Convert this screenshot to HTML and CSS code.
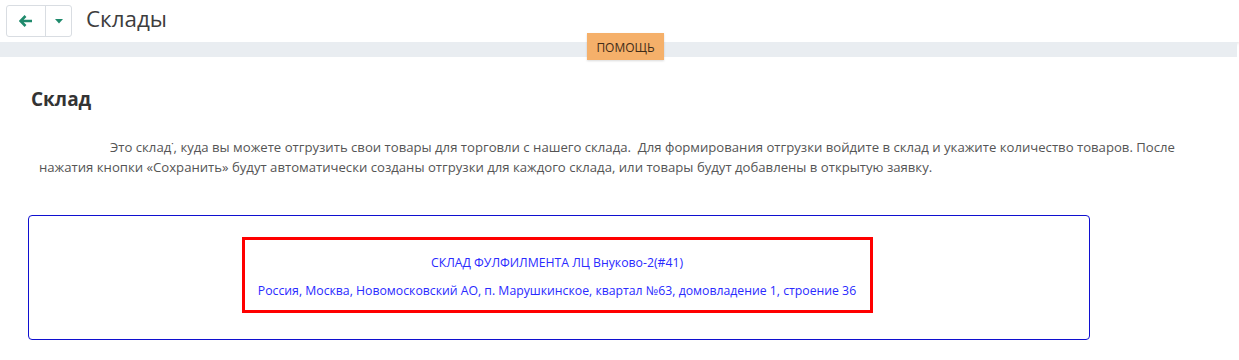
FILE: index.html
```html
<!DOCTYPE html>
<html lang="ru">
<head>
<meta charset="utf-8">
<title>Склады</title>
<link rel="stylesheet" href="styles.css">
</head>
<body>
<header class="topbar">
  <div class="btn-group">
    <button class="btn btn-back" type="button" aria-label="Назад">
      <svg width="14" height="12" viewBox="0 0 14 12"><path d="M6.5 1 L1.5 6 L6.5 11 M2 6 H13" fill="none" stroke="#1f8a6c" stroke-width="2.6" stroke-linejoin="miter"/></svg>
    </button>
    <button class="btn btn-caret" type="button" aria-label="Меню">
      <svg width="8" height="5" viewBox="0 0 8 5"><path d="M0 0 H8 L4 4.5 Z" fill="#1f8a6c"/></svg>
    </button>
  </div>
  <h1 class="page-title">Склады</h1>
</header>
<div class="band">
  <button class="help" type="button">ПОМОЩЬ</button>
</div>
<main class="content">
  <h2 class="section-title">Склад</h2>
  <p class="intro">Это склад˙, куда вы можете отгрузить свои товары для торговли с нашего склада.&nbsp; Для формирования отгрузки войдите в склад и укажите количество товаров. После нажатия кнопки «Сохранить» будут автоматически созданы отгрузки для каждого склада, или товары будут добавлены в открытую заявку.</p>
  <div class="warehouse-box">
    <div class="warehouse">
      <div class="wh-name">СКЛАД ФУЛФИЛМЕНТА ЛЦ Внуково-2(#41)</div>
      <div class="wh-addr">Россия, Москва, Новомосковский АО, п. Марушкинское, квартал №63, домовладение 1, строение 36</div>
    </div>
  </div>
</main>
</body>
</html>
```
FILE: styles.css
```css
* { box-sizing: border-box; }
html, body { margin: 0; padding: 0; background: #fff; }
body {
  font-family: "Open Sans", "Noto Sans", sans-serif;
  color: #333;
  width: 1239px;
  height: 360px;
  overflow: hidden;
}
.topbar {
  height: 42px;
  display: flex;
  align-items: center;
  padding: 0 0 0 6px;
  background: #fff;
  box-shadow: 0 1px 4px rgba(0,0,0,0.16);
  position: relative;
  z-index: 2;
}
.btn-group {
  display: flex;
  height: 32px;
  margin-top: -1px;
  border: 1px solid #d9dde2;
  border-radius: 3px;
  background: #fff;
}
.btn {
  border: 0;
  background: transparent;
  padding: 0;
  margin: 0;
  display: flex;
  align-items: center;
  justify-content: center;
  cursor: pointer;
}
.btn-back { width: 39px; border-right: 1px solid #d9dde2; }
.btn-caret { width: 25px; padding-top: 1px; }
.page-title {
  margin: 0 0 0 14px;
  font-size: 22.4px;
  font-weight: 400;
  color: #3d3d3d;
  line-height: 1;
  position: relative;
  top: -2px;
}
.band {
  height: 15px;
  background: #e9edf1;
  margin-right: 2px;
  display: flex;
  justify-content: center;
  position: relative;
  z-index: 3;
}
.help {
  position: absolute;
  left: 587px;
  top: -9px;
  width: 77px;
  height: 27px;
  border: 0;
  background: #f5b06a;
  color: #3f2c18;
  font-family: "Open Sans", sans-serif;
  font-size: 12px;
  padding: 2px 0 0;
  box-shadow: 0 1px 2px rgba(0,0,0,0.15);
}
.content {
  padding: 29px 0 0 31px;
}
.section-title {
  margin: 0;
  font-size: 19px;
  font-weight: 700;
  color: #333;
  line-height: 26px;
}
.intro {
  margin: 25px 0 0 8px;
  width: 1160px;
  font-size: 13.15px;
  line-height: 20px;
  color: #555;
  text-indent: 71px;
}
.warehouse-box {
  margin: 38px 0 0 -3px;
  width: 1062px;
  height: 125px;
  border: 1px solid #1010d0;
  border-radius: 4px;
  display: flex;
  justify-content: center;
  padding: 21px 4px 0 0;
}
.warehouse {
  width: 631px;
  height: 76px;
  border: 3px solid #ff0000;
  color: #2a2aff;
  font-size: 12.25px;
  text-align: center;
  padding-top: 14px;
}
.wh-name { line-height: 18px; }
.wh-addr { line-height: 18px; margin-top: 10px; }
```
